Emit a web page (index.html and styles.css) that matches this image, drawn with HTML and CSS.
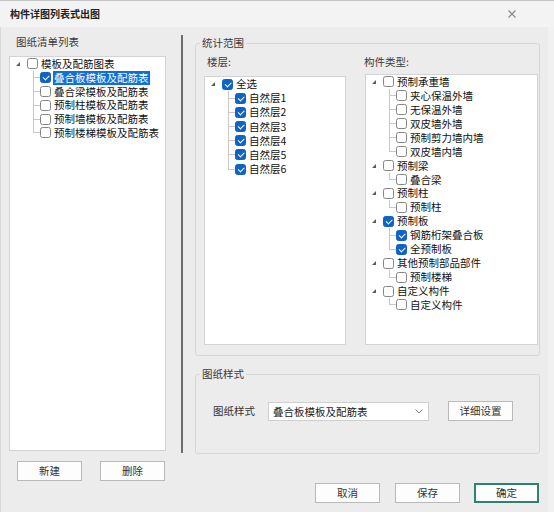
FILE: index.html
```html
<!DOCTYPE html>
<html lang="zh-CN">
<head>
<meta charset="utf-8">
<link rel="stylesheet" href="styles.css">
</head>
<body>
<div class="window">
  <div class="titlebar">
    <span class="title">构件详图列表式出图</span>
    <svg class="close" width="8" height="8" viewBox="0 0 8 8"><path d="M0.5 0.5L7.5 7.5M7.5 0.5L0.5 7.5" stroke="#8a8a8a" stroke-width="1.2"/></svg>
  </div>
  <div class="main">
    <div class="leftcol">
      <div class="label">图纸清单列表</div>
      <div class="listbox left-list">
        <div class="tree t-left">
          <div class="row"><span class="tri"></span><span class="cb"></span><span class="txt">模板及配筋图表</span></div>
          <div class="row child"><span class="conn"></span><span class="cb on"></span><span class="txt sel">叠合板模板及配筋表</span></div>
          <div class="row child"><span class="conn"></span><span class="cb"></span><span class="txt">叠合梁模板及配筋表</span></div>
          <div class="row child"><span class="conn"></span><span class="cb"></span><span class="txt">预制柱模板及配筋表</span></div>
          <div class="row child"><span class="conn"></span><span class="cb"></span><span class="txt">预制墙模板及配筋表</span></div>
          <div class="row child last"><span class="conn"></span><span class="cb"></span><span class="txt">预制楼梯模板及配筋表</span></div>
        </div>
      </div>
      <div class="btnrow"><button class="btn">新建</button><button class="btn">删除</button></div>
    </div>
    <div class="divider"></div>
    <div class="rightcol">
      <fieldset class="group g1">
        <legend>统计范围</legend>
        <div class="cols">
          <div class="col floorcol">
            <div class="sublabel">楼层:</div>
            <div class="listbox floor-list">
              <div class="tree t-floor">
                <div class="row"><span class="tri"></span><span class="cb on"></span><span class="txt">全选</span></div>
                <div class="row child"><span class="conn"></span><span class="cb on"></span><span class="txt">自然层1</span></div>
                <div class="row child"><span class="conn"></span><span class="cb on"></span><span class="txt">自然层2</span></div>
                <div class="row child"><span class="conn"></span><span class="cb on"></span><span class="txt">自然层3</span></div>
                <div class="row child"><span class="conn"></span><span class="cb on"></span><span class="txt">自然层4</span></div>
                <div class="row child"><span class="conn"></span><span class="cb on"></span><span class="txt">自然层5</span></div>
                <div class="row child last"><span class="conn"></span><span class="cb on"></span><span class="txt">自然层6</span></div>
              </div>
            </div>
          </div>
          <div class="col compcol">
            <div class="sublabel">构件类型:</div>
            <div class="listbox comp-list">
              <div class="tree t-comp">
                <div class="row"><span class="tri"></span><span class="cb"></span><span class="txt">预制承重墙</span></div>
                <div class="row child"><span class="conn"></span><span class="cb"></span><span class="txt">夹心保温外墙</span></div>
                <div class="row child"><span class="conn"></span><span class="cb"></span><span class="txt">无保温外墙</span></div>
                <div class="row child"><span class="conn"></span><span class="cb"></span><span class="txt">双皮墙外墙</span></div>
                <div class="row child"><span class="conn"></span><span class="cb"></span><span class="txt">预制剪力墙内墙</span></div>
                <div class="row child last"><span class="conn"></span><span class="cb"></span><span class="txt">双皮墙内墙</span></div>
                <div class="row"><span class="tri"></span><span class="cb"></span><span class="txt">预制梁</span></div>
                <div class="row child last"><span class="conn"></span><span class="cb"></span><span class="txt">叠合梁</span></div>
                <div class="row"><span class="tri"></span><span class="cb"></span><span class="txt">预制柱</span></div>
                <div class="row child last"><span class="conn"></span><span class="cb"></span><span class="txt">预制柱</span></div>
                <div class="row"><span class="tri"></span><span class="cb on"></span><span class="txt">预制板</span></div>
                <div class="row child"><span class="conn"></span><span class="cb on"></span><span class="txt">钢筋桁架叠合板</span></div>
                <div class="row child last"><span class="conn"></span><span class="cb on"></span><span class="txt">全预制板</span></div>
                <div class="row"><span class="tri"></span><span class="cb"></span><span class="txt">其他预制部品部件</span></div>
                <div class="row child last"><span class="conn"></span><span class="cb"></span><span class="txt">预制楼梯</span></div>
                <div class="row"><span class="tri"></span><span class="cb"></span><span class="txt">自定义构件</span></div>
                <div class="row child last"><span class="conn"></span><span class="cb"></span><span class="txt">自定义构件</span></div>
              </div>
            </div>
          </div>
        </div>
      </fieldset>
      <fieldset class="group g2">
        <legend>图纸样式</legend>
        <div class="stylerow">
          <span class="rowlabel">图纸样式</span>
          <div class="select"><span>叠合板模板及配筋表</span><svg width="8" height="5" viewBox="0 0 8 5"><path d="M0.5 0.5L4 4L7.5 0.5" fill="none" stroke="#777" stroke-width="1"/></svg></div>
          <button class="btn detail">详细设置</button>
        </div>
      </fieldset>
    </div>
  </div>
  <div class="footer">
    <button class="btn">取消</button>
    <button class="btn">保存</button>
    <button class="btn primary">确定</button>
  </div>
</div>
</body>
</html>
```

FILE: styles.css
```css
* { box-sizing: border-box; }
html, body { margin: 0; padding: 0; }
body {
  width: 554px;
  height: 512px;
  overflow: hidden;
  font-family: "Noto Sans CJK SC", "Noto Sans", sans-serif;
  font-size: 10.5px;
  color: #1a1a1a;
  background: #ececec;
}
.window {
  width: 554px;
  height: 512px;
  background: #ececec;
  box-shadow: inset 1px 0 0 #d9d9d9, inset -6px 0 0 #f1f1f1;
}
.titlebar {
  height: 27px;
  border-top: 1px solid #c4c4c4;
  background: #f3f3f3;
  display: flex;
  align-items: center;
  padding: 0 38px 0 10px;
}
.title { font-size: 10px; font-weight: bold; color: #222; line-height: 14px; }
.close { margin-left: auto; }

.main { display: flex; align-items: flex-start; height: 454px; }

.leftcol { margin-left: 9px; width: 157px; padding-top: 8px; }
.label { line-height: 14px; padding-left: 7px; color: #3a3a3a; }
.listbox { background: #fff; border: 1px solid #d3d3d3; }
.left-list { margin-top: 7px; height: 395px; padding-left: 6px; }
.btnrow { display: flex; gap: 18px; margin-top: 10px; padding-left: 8px; }

.btn {
  width: 65px;
  height: 20px;
  font: inherit;
  color: #333;
  background: #fdfdfd;
  border: 1px solid #b9b9b9;
  padding: 0;
  line-height: 18px;
}

.divider { margin-left: 15px; margin-top: 8px; width: 2px; height: 418px; background: #6e6e6e; }

.rightcol { margin-left: 12px; width: 345px; padding-top: 9px; }
.group { margin: 0; padding: 0; border: 1px solid #d6d6d6; border-radius: 3px; min-width: 0; }
.group legend { margin-left: 4px; padding: 0 2px; line-height: 14px; color: #3a3a3a; }
.cols { display: flex; align-items: flex-start; padding: 0 0 10px 8px; gap: 19px; }
.sublabel { margin-top: 5px; line-height: 14px; color: #3a3a3a; padding-left: 3px; }
.floorcol { width: 142px; }
.compcol { width: 173px; }
.compcol .sublabel { padding-left: 0; margin-left: -1px; }
.floor-list { margin-top: 7px; height: 269px; padding-left: 6px; }
.comp-list { margin-top: 5px; height: 271px; padding-left: 6px; }

.g2 { margin-top: 11px; }
.stylerow { display: flex; align-items: center; margin-top: 20px; margin-bottom: 32px; padding-left: 17px; height: 20px; }
.rowlabel { color: #333; margin-right: 13px; line-height: 14px; }
.select {
  width: 161px;
  height: 19px;
  margin-top: 1px;
  background: #fff;
  border: 1px solid #cfcfcf;
  display: flex;
  align-items: center;
  justify-content: space-between;
  padding: 0 5px 0 4px;
  line-height: 14px;
}
.detail { margin-left: 19px; }

.footer { display: flex; justify-content: flex-end; gap: 15px; margin-top: 2px; padding-right: 15px; }
.primary { border: 2px solid #2f8174; margin-left: -1px; line-height: 16px; }

/* trees */
.tree { padding-top: 0; }
.t-left { --rh: 13.8px; }
.t-floor { --rh: 14.17px; }
.t-comp { --rh: 13.94px; }
.row { display: flex; align-items: center; height: var(--rh); white-space: nowrap; }
.tri {
  width: 0;
  height: 0;
  border-style: solid;
  border-width: 0 0 4px 4px;
  border-color: transparent transparent #5a5a5a transparent;
  margin-right: 7px;
  flex: none;
}
.child { padding-left: 17px; }
.conn {
  width: 7px;
  align-self: stretch;
  flex: none;
  background:
    linear-gradient(#c8c8c8, #c8c8c8) 0 0 / 1px 100% no-repeat,
    linear-gradient(#c8c8c8, #c8c8c8) 0 50% / 100% 1px no-repeat;
}
.last .conn {
  background:
    linear-gradient(#c8c8c8, #c8c8c8) 0 0 / 1px 50% no-repeat,
    linear-gradient(#c8c8c8, #c8c8c8) 0 50% / 100% 1px no-repeat;
}
.cb {
  width: 11px;
  height: 11px;
  border: 1px solid #858585;
  border-radius: 2.5px;
  background: #fff;
  flex: none;
  position: relative;
}
.cb.on { background: #0f63c6; border-color: #0f63c6; }
.cb.on::after {
  content: "";
  position: absolute;
  left: 2px;
  top: 2px;
  width: 5px;
  height: 2.5px;
  border-left: 1.1px solid #fff;
  border-bottom: 1.1px solid #fff;
  transform: rotate(-45deg);
}
.txt { margin-left: 3px; line-height: 14px; color: #111; }
.txt.sel { margin-left: 2px; padding: 0 1px; background: #1170d8; color: #fff; }
```
